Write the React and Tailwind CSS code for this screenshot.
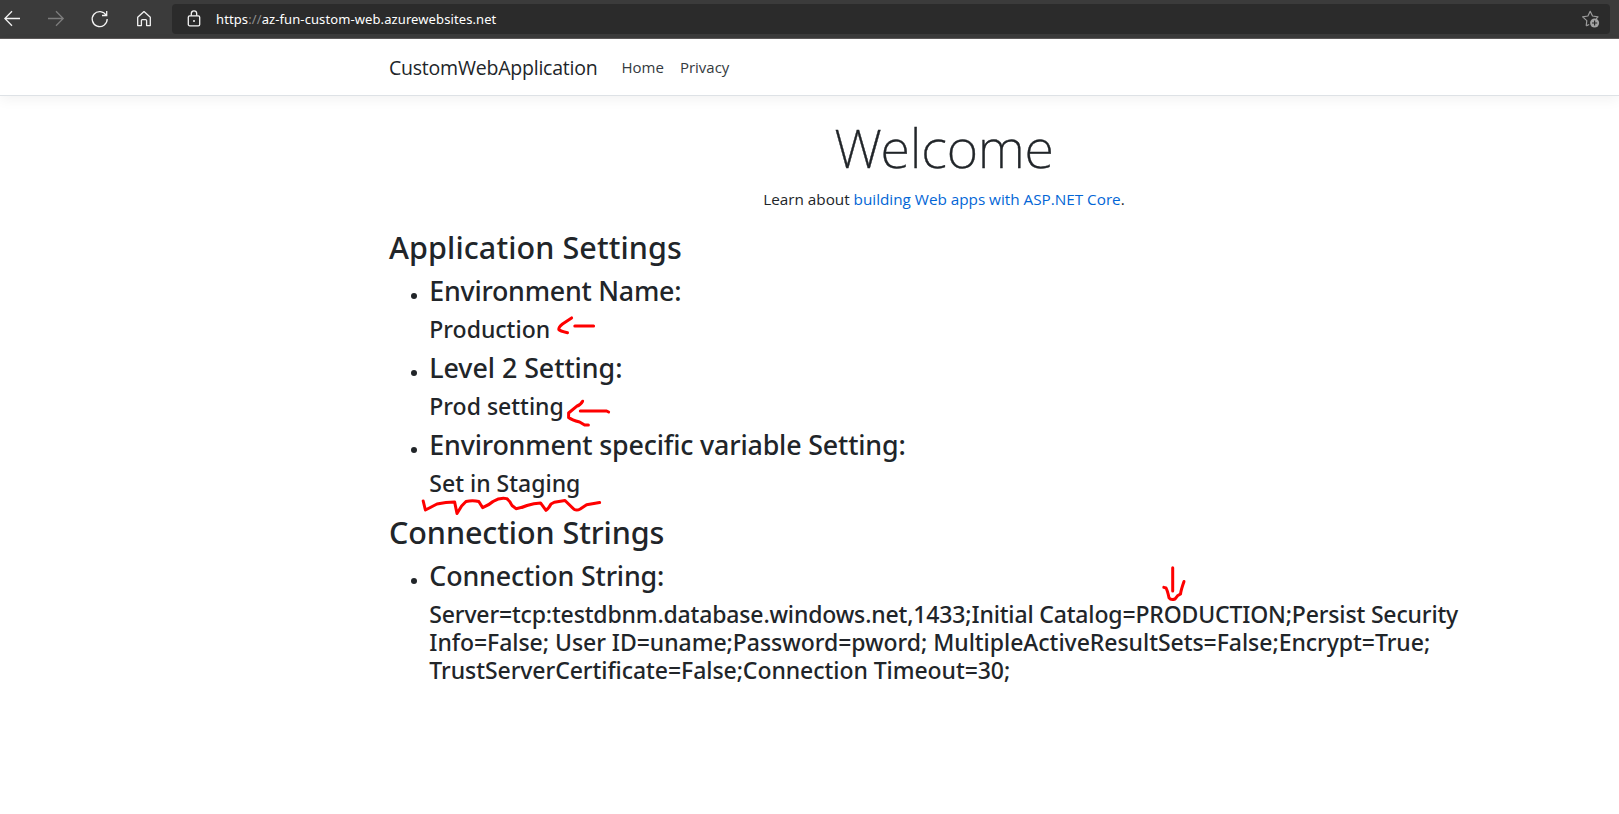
function BrowserBar() {
  return (
    <div className="flex h-[39px] items-start border-b border-[#5d5a5a] bg-[#3b3b3b] pr-[9px] pl-1">
      <div className="flex h-[38px] w-[168px] items-center">
        <svg className="h-[38px] w-[150px]" viewBox="4 0 150 38" fill="none" stroke="#f3f3f3" strokeWidth="1.3">
          <path d="M20 18.5H4.8M12 11.3L4.8 18.5L12 25.7" />
          <path d="M48 18.5H63.2M56 11.3L63.2 18.5L56 25.7" stroke="#7d7d7d" />
          <path d="M106.2 15.3A7.5 7.5 0 1 0 107.2 19M106.7 10.9V15.5H102" />
          <path d="M137.7 17.2L144 11.6L150.3 17.2V25.6H146.6V20.6Q146.6 19.6 145.6 19.6H142.4Q141.4 19.6 141.4 20.6V25.6H137.7Z" strokeLinejoin="round" />
        </svg>
      </div>
      <div className="mt-1 flex h-[30px] flex-1 items-center rounded bg-[#2b2b2b] pr-[10px] pl-[15px]">
        <svg className="h-[18px] w-[14px]" viewBox="0 0 14 18" fill="none" stroke="#f3f3f3" strokeWidth="1.3">
          <rect x="1.3" y="5.8" width="11.4" height="10" rx="1.4" />
          <path d="M4.3 5.8V3.6a2.7 2.7 0 0 1 5.4 0v2.2" />
          <circle cx="7" cy="11" r="1" fill="#f3f3f3" stroke="none" />
        </svg>
        <span className="ml-[15px] text-[13px] leading-[30px] tracking-[0.1px] whitespace-nowrap text-white">
          https<span className="text-[#8d8d8d]">://</span>az-fun-custom-web.azurewebsites.net
        </span>
        <svg className="ml-auto h-[18px] w-[19px]" viewBox="0 0 19 18" fill="none" stroke="#9b9b9b" strokeWidth="1.2">
          <path d="M5.2 15.9L5.8 10.6L1.6 6.9L6.9 6L9.2 1.3L11.5 6L17 6.9L15.2 8.8M5.2 15.9L8.2 14.5" strokeLinejoin="round" />
          <circle cx="13.6" cy="13" r="4.5" fill="#a3a3a3" stroke="none" />
          <path d="M13.6 10.4V15.6M11 13H16.2" stroke="#2b2b2b" />
        </svg>
      </div>
    </div>
  );
}

function Item({ title, titleClass = "", children }) {
  return (
    <li className="mb-2 flex">
      <span className="mt-[19px] mr-[12.3px] ml-[22px] size-[6px] shrink-0 rounded-full bg-[#212529]" />
      <div className="whitespace-nowrap">
        <h3 className={"mb-2 text-[26.8px] leading-[33px] font-medium " + titleClass}>{title}</h3>
        <h4 className="text-[23px] leading-[28.2px] font-medium">{children}</h4>
      </div>
    </li>
  );
}

function Annotations() {
  return (
    <svg
      className="pointer-events-none absolute top-0 left-0 h-[814px] w-[1619px]"
      viewBox="0 0 1619 814"
      fill="none"
      stroke="#fe0000"
      strokeWidth="3"
      strokeLinecap="round"
      strokeLinejoin="round"
    >
      <path d="M571.6 317.9L562.5 324Q558.6 327 558.8 329.5Q560 331 567.5 332.7M574.8 325.9H593.6" />
      <path d="M582.6 401.2Q580.6 405 576.6 406.3L568.6 413V417.5Q571.6 420 579.6 422L584.6 425H588.4M580.3 411H606.6L608.6 412" />
      <path d="M423.2 501L425.4 510L437 504Q446 502 454.6 501.9L457 513.5L461.6 506L466 501.5Q472.6 499.9 478.8 501.5L482.7 507.7Q489 505 493 501.5Q500 497.2 506.6 498.6Q510 501 512 505.5L516 508.7Q521 508 527 505.5Q534 503 540.5 502.9L546 510.3Q549 508 551 504L554.3 502.2L565 500.5L574 509.3Q577 511 580.2 509L586.6 504.8L599.6 502.6" />
      <path d="M1172.7 567.7V591M1163.8 587.4L1166 588Q1167.5 590.5 1169 597.8Q1171 600.5 1175 599L1177.5 595.8L1180.5 594Q1181 590 1184 581.5" />
    </svg>
  );
}

export default function App() {
  return (
    <div className="relative h-[814px] w-[1619px] overflow-hidden bg-white font-['Noto_Sans','Open_Sans',sans-serif] text-[#212529]">
      <BrowserBar />
      <header className="flex h-[57px] items-center border-b border-[#dee2e6] pl-[389px] font-['Open_Sans',sans-serif] shadow-[0_4px_12px_rgba(0,0,0,0.05)]">
        <span className="w-[232.5px] pt-px text-[19.5px] tracking-[-0.22px]">CustomWebApplication</span>
        <nav className="flex gap-4 text-[15px] text-[#343a40]">
          <a>Home</a>
          <a>Privacy</a>
        </nav>
      </header>
      <main className="ml-[389px] w-[1110px] pt-[18px]">
        <div className="text-center">
          <h1 className="text-[54px] leading-[66px] font-extralight tracking-[-0.2px] [-webkit-text-stroke:0.4px_#212529]">Welcome</h1>
          <p className="mt-[7px] font-['Open_Sans',sans-serif] text-[15.3px] leading-6 tracking-[-0.02px]">
            Learn about <a className="text-[#0366d6]">building Web apps with ASP.NET Core</a>.
          </p>
        </div>
        <section className="mt-[17px]">
          <h2 className="mb-2 text-[30.5px] leading-[38px] font-medium tracking-[0.1px]">Application Settings</h2>
          <ul>
            <Item title="Environment Name:" titleClass="tracking-[-0.24px]">Production</Item>
            <Item title="Level 2 Setting:" titleClass="tracking-[-0.04px]">Prod setting</Item>
            <Item title="Environment specific variable Setting:" titleClass="tracking-[-0.16px]">Set in Staging</Item>
          </ul>
        </section>
        <section className="mt-[15px]">
          <h2 className="mb-2 text-[30.5px] leading-[38px] font-medium tracking-[-0.08px]">Connection Strings</h2>
          <ul>
            <Item title="Connection String:" titleClass="tracking-[-0.14px]">
              <span className="tracking-[-0.16px]">Server=tcp:testdbnm.database.windows.net,1433;Initial Catalog=PRODUCTION;Persist Security</span>
              <br />
              <span className="tracking-[-0.04px]">Info=False; User ID=uname;Password=pword; MultipleActiveResultSets=False;Encrypt=True;</span>
              <br />
              <span className="tracking-[-0.06px]">TrustServerCertificate=False;Connection Timeout=30;</span>
            </Item>
          </ul>
        </section>
      </main>
      <Annotations />
    </div>
  );
}
